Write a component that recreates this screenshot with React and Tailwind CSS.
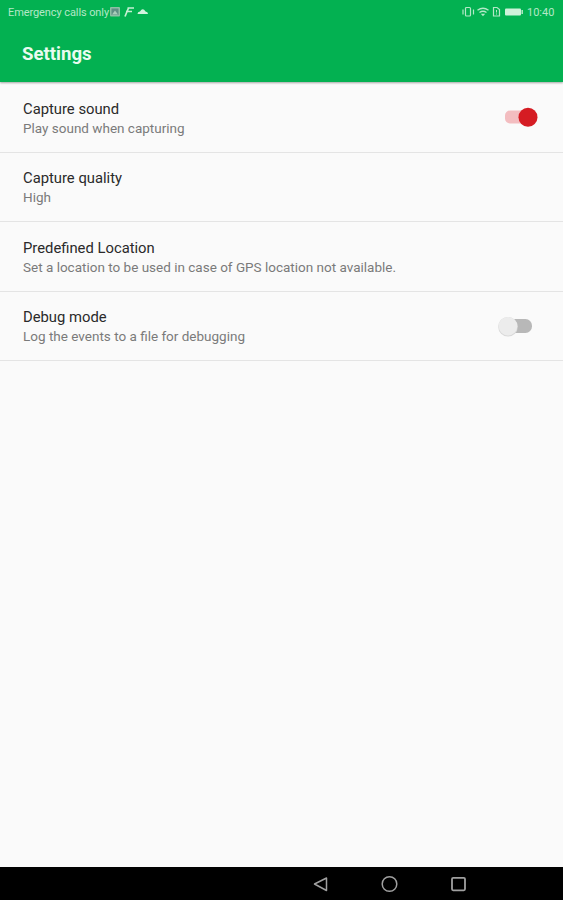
function StatusBar() {
  return (
    <div className="flex h-6 items-center justify-between pl-2 pr-[8px] text-[11px] text-[#b4e8c7]">
      <div className="flex items-center">
        <span className="w-[101px] whitespace-nowrap pt-[2px] tracking-[-0.09px]">Emergency calls only</span>
        <svg width="41" height="12" viewBox="0 0 41 12" fill="none">
          <rect x="1" y="1" width="10" height="9.500" rx="1" fill="#8fbfa5" />
          <rect x="2.500" y="2.500" width="7" height="6.500" fill="#5f8f84" />
          <path d="M3 8.500l3-4 3 4z" fill="#a9cdb9" />
          <path d="M18.500 2h6.500M17 5.500h6M19.500 2l-3.500 8.500" stroke="#c5efd3" strokeWidth="1.700" />
          <path d="M28.500 8q0-2.300 2.500-2.500Q33.800 1 36.500 5.500q2.500.2 2.500 2.500z" fill="#d2f3dd" />
        </svg>
      </div>
      <div className="flex items-center">
        <svg width="63" height="12" viewBox="0 0 63 12" fill="none" stroke="#b4e8c7">
          <rect x="4.500" y="1.500" width="5" height="8.500" rx="1" strokeWidth="1.200" />
          <path d="M2 3.500v5M12.500 3.500v5" strokeWidth="1.200" />
          <path d="M16.500 4.200q5.500-4 11 0M18.500 6.500q3.500-2.400 7 0" strokeWidth="1.400" />
          <path d="M19.800 7.800l2.200 2.400 2.200-2.400z" fill="#b4e8c7" stroke="none" />
          <path d="M32.500 1.500h3.500l2.500 2v6.500h-6z" strokeWidth="1.200" />
          <path d="M35.500 4v2.500M35.500 7.500v1" />
          <rect x="44" y="2.500" width="16" height="7" rx="1" fill="#cef2da" stroke="none" />
          <path d="M61.200 4v4" strokeWidth="1.500" />
        </svg>
        <span className="ml-[3px] w-[28px] whitespace-nowrap pt-[2px]">10:40</span>
      </div>
    </div>
  );
}

function Toggle({ on }) {
  return on ? (
    <svg width="42" height="24" viewBox="0 0 42 24">
      <rect x="9" y="5.500" width="28" height="13" rx="5" fill="#f3bdc0" />
      <circle cx="32" cy="12.300" r="9.500" fill="#d51c23" />
    </svg>
  ) : (
    <svg width="42" height="24" viewBox="0 0 42 24">
      <rect x="8" y="5" width="28" height="14" rx="6.500" fill="#b8b8b8" />
      <circle cx="12" cy="12.800" r="9.800" fill="#d9d9d9" />
      <circle cx="12" cy="12.200" r="9.300" fill="#ececec" />
    </svg>
  );
}

const rows = [
  { title: "Capture sound", detail: "Play sound when capturing", on: true },
  { title: "Capture quality", detail: "High" },
  { title: "Predefined Location", detail: "Set a location to be used in case of GPS location not available." },
  { title: "Debug mode", detail: "Log the events to a file for debugging", on: false },
];

export default function App() {
  return (
    <div className="flex h-[900px] w-[563px] flex-col overflow-hidden bg-[#fafafa] font-['Roboto',sans-serif]">
      <header className="z-10 h-[82px] shrink-0 bg-[#03b151] shadow-[0_1px_2px_rgba(0,0,0,0.35)]">
        <StatusBar />
        <h1 className="mt-[16px] pl-[22px] text-[18.600px] leading-7 font-bold text-[#e9fbf0]">Settings</h1>
      </header>
      <main className="flex-1 pt-px">
        {rows.map((row) => (
          <div key={row.title} className="flex h-[69.500px] items-center justify-between border-b border-[#e4e4e4] pl-[23px] pr-[25px]">
            <div className="whitespace-nowrap pt-[2px]">
              <div className="text-[14.800px] leading-[20px] text-[#2a2a2a]">{row.title}</div>
              <div className="text-[13.500px] leading-[19px] text-[#7a7a7a]">{row.detail}</div>
            </div>
            {row.on !== undefined && <Toggle on={row.on} />}
          </div>
        ))}
      </main>
      <nav className="flex h-[33px] shrink-0 items-center bg-black pl-[312px]">
        <svg width="155" height="20" viewBox="0 0 155 20" fill="none" stroke="#a0a0a0" strokeWidth="1.500">
          <path d="M14.500 4v12.500L2.500 10z" strokeLinejoin="round" />
          <circle cx="77.500" cy="10" r="7.300" />
          <rect x="140" y="3.800" width="13" height="12.500" rx="1.200" strokeWidth="1.800" />
        </svg>
      </nav>
    </div>
  );
}
